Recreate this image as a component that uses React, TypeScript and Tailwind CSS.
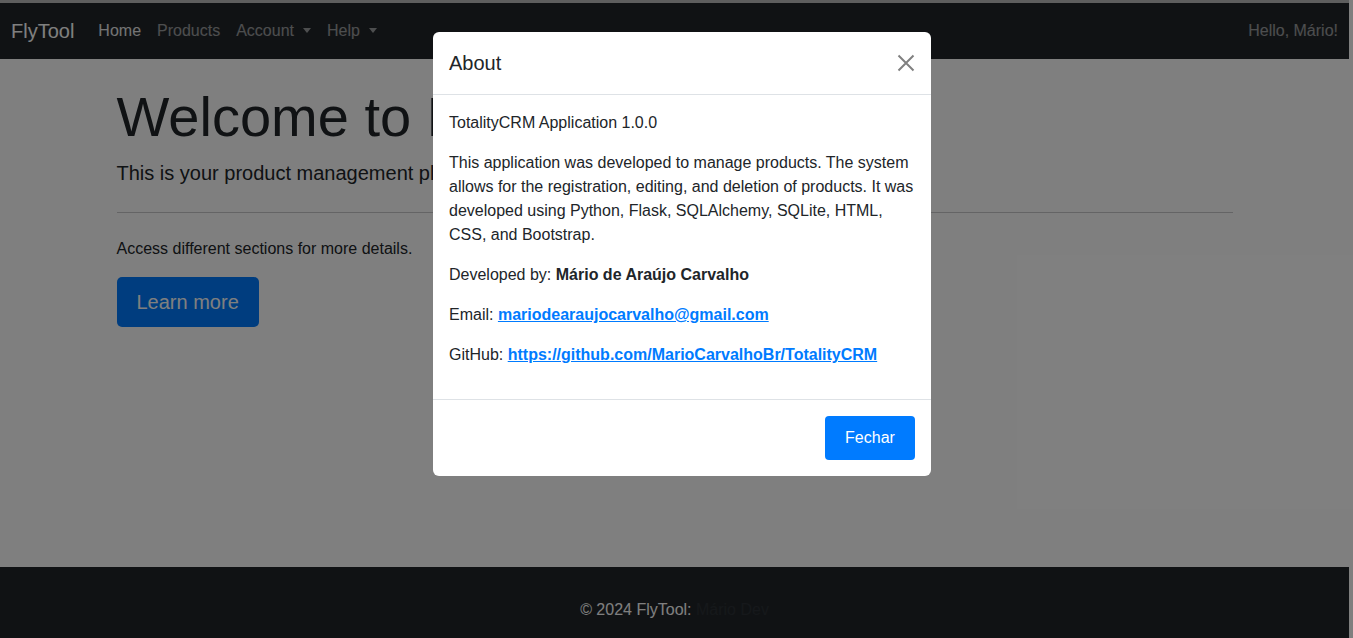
import React from "react";

function Caret() {
  return (
    <span className="ml-[9px] inline-block align-[3px] w-0 h-0 border-l-[4px] border-r-[4px] border-t-[5px] border-l-transparent border-r-transparent border-t-current" />
  );
}

export default function App() {
  return (
    <div
      className="relative w-[1353px] h-[638px] overflow-hidden bg-white text-[#212529]"
      style={{ fontFamily: '"Liberation Sans", Arial, sans-serif' }}
    >
      <div className="w-[1349px] min-h-[638px] flex flex-col">
        <div className="h-[3px] bg-[#bdbdbd]" />
        <nav className="h-[56px] bg-[#212529] flex items-center justify-between pl-[11px] pr-[11px]">
          <div className="flex items-center">
            <span className="text-[20px] leading-[30px] text-white mr-[16px]">FlyTool</span>
            <div className="flex items-center text-[16px] leading-[24px]">
              <span className="px-[8px] text-white/90">Home</span>
              <span className="px-[8px] text-white/55">Products</span>
              <span className="px-[8px] text-white/55">
                Account<Caret />
              </span>
              <span className="px-[8px] text-white/55">
                Help<Caret />
              </span>
            </div>
          </div>
          <span className="text-[16px] leading-[24px] text-white/55">Hello, Mário!</span>
        </nav>
        <main className="flex-1">
          <div className="w-[1116px] mx-auto pt-[24px]">
            <h1 className="text-[56px] leading-[1.2] font-normal mb-[8px]">Welcome to FlyTool!</h1>
            <p className="text-[20px] leading-[30px] mb-[24px]">
              This is your product management platform.
            </p>
            <div className="border-t border-[#c8c9ca] mb-[24px]" />
            <p className="text-[16px] leading-[24px] mb-[16px]">
              Access different sections for more details.
            </p>
            <button className="bg-[#007bff] text-white text-[20px] leading-[30px] px-[20px] py-[10px] rounded-[5px]">
              Learn more
            </button>
          </div>
        </main>
        <footer className="bg-[#212529] text-center pt-[31px] pb-[16px] text-[16px] leading-[24px]">
          <span className="text-white">© 2024 FlyTool: </span>
          <span className="text-[#2c3136]">Mário Dev</span>
        </footer>
      </div>

      {/* overlay */}
      <div className="absolute inset-0 bg-black/50" />

      {/* modal */}
      <div className="absolute left-[433px] top-[32px] w-[498px] bg-white rounded-[6px] text-[16px] leading-[24px] text-[#212529]">
        <div className="h-[63px] pl-[16px] pr-[16px] flex items-center justify-between border-b border-[#dee2e6]">
          <h5 className="text-[20px] leading-[30px] font-normal">About</h5>
          <svg width="18" height="18" viewBox="0 0 18 18">
            <path d="M1.5 1.5 L16.5 16.5 M16.5 1.5 L1.5 16.5" stroke="#808080" strokeWidth="2" fill="none" />
          </svg>
        </div>
        <div className="p-[16px] flex flex-col gap-[16px]">
          <p>TotalityCRM Application 1.0.0</p>
          <p>
            This application was developed to manage products. The system allows for the registration,
            editing, and deletion of products. It was developed using Python, Flask, SQLAlchemy, SQLite,
            HTML, CSS, and Bootstrap.
          </p>
          <p>
            Developed by: <strong className="font-bold">Mário de Araújo Carvalho</strong>
          </p>
          <p>
            Email:{" "}
            <a className="font-bold text-[#007bff] underline">mariodearaujocarvalho@gmail.com</a>
          </p>
          <p className="mb-[16px]">
            GitHub:{" "}
            <a className="font-bold text-[#007bff] underline">
              https://github.com/MarioCarvalhoBr/TotalityCRM
            </a>
          </p>
        </div>
        <div className="border-t border-[#dee2e6] p-[16px] flex justify-end">
          <button className="w-[90px] h-[44px] bg-[#007bff] text-white rounded-[4px] text-[16px]">
            Fechar
          </button>
        </div>
      </div>
    </div>
  );
}
